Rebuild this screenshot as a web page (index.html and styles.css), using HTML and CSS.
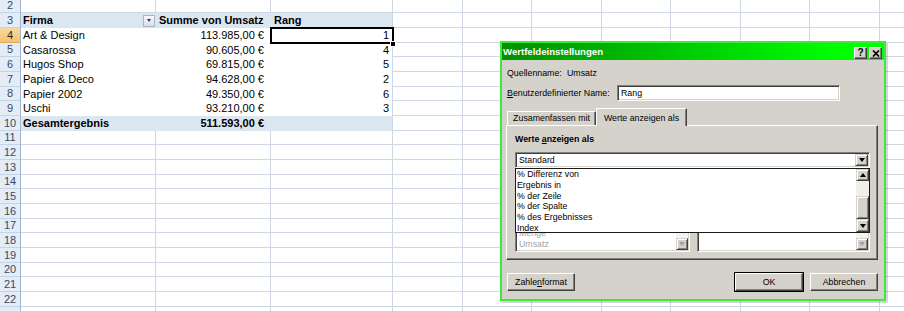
FILE: index.html
```html
<!DOCTYPE html>
<html lang="de">
<head>
<meta charset="utf-8">
<title>Wertfeldeinstellungen</title>
<link rel="stylesheet" href="styles.css">
</head>
<body>
<div class="sheet">
  <div class="rowheads">
    <div class="rh">2</div>
    <div class="rh">3</div>
    <div class="rh active">4</div>
    <div class="rh">5</div>
    <div class="rh">6</div>
    <div class="rh">7</div>
    <div class="rh">8</div>
    <div class="rh">9</div>
    <div class="rh">10</div>
    <div class="rh">11</div>
    <div class="rh">12</div>
    <div class="rh">13</div>
    <div class="rh">14</div>
    <div class="rh">15</div>
    <div class="rh">16</div>
    <div class="rh">17</div>
    <div class="rh">18</div>
    <div class="rh">19</div>
    <div class="rh">20</div>
    <div class="rh">21</div>
    <div class="rh">22</div>
    <div class="rh"></div>
  </div>
  <div class="cells">
    <div class="lines">
      <div class="col wa"></div>
      <div class="col wb"></div>
      <div class="col wc"></div>
      <div class="col"></div>
      <div class="col narrow"></div>
      <div class="col"></div>
      <div class="col narrow"></div>
      <div class="col"></div>
      <div class="col narrow"></div>
      <div class="col"></div>
      <div class="col"></div>
    </div>
    <div class="overlay">
      <div class="pivot">
        <div class="prow band">
          <div class="pc head-a">Firma<span class="filter"><i class="tri-down small"></i></span></div>
          <div class="pc">Summe von Umsatz</div>
          <div class="pc">Rang</div>
        </div>
        <div class="prow">
          <div class="pc">Art &amp; Design</div>
          <div class="pc num">113.985,00 €</div>
          <div class="pc num rc sel">1</div>
        </div>
        <div class="prow">
          <div class="pc">Casarossa</div>
          <div class="pc num">90.605,00 €</div>
          <div class="pc num rc">4</div>
        </div>
        <div class="prow">
          <div class="pc">Hugos Shop</div>
          <div class="pc num">69.815,00 €</div>
          <div class="pc num rc">5</div>
        </div>
        <div class="prow">
          <div class="pc">Papier &amp; Deco</div>
          <div class="pc num">94.628,00 €</div>
          <div class="pc num rc">2</div>
        </div>
        <div class="prow">
          <div class="pc">Papier 2002</div>
          <div class="pc num">49.350,00 €</div>
          <div class="pc num rc">6</div>
        </div>
        <div class="prow">
          <div class="pc">Uschi</div>
          <div class="pc num">93.210,00 €</div>
          <div class="pc num rc">3</div>
        </div>
        <div class="prow band">
          <div class="pc">Gesamtergebnis</div>
          <div class="pc num">511.593,00 €</div>
          <div class="pc"></div>
        </div>
      </div>
    </div>
  </div>
</div>

<div class="dialog">
  <div class="titlebar">
    <span class="title">Wertfeldeinstellungen</span>
    <div class="tbtns">
      <span class="tbtn q">?</span>
      <span class="tbtn"><svg width="8" height="7" viewBox="0 0 8 7"><path d="M1 0.5 L7 6.5 M7 0.5 L1 6.5" stroke="#000" stroke-width="1.7" fill="none"/></svg></span>
    </div>
  </div>
  <div class="dbody">
    <div class="line src"><span class="lbl lbl-src">Quellenname:</span><span>Umsatz</span></div>
    <div class="line name"><span class="lbl lbl-name"><u>B</u>enutzerdefinierter Name:</span><div class="input">Rang</div></div>
    <div class="tabs">
      <div class="tab">Zusamenfassen mit</div>
      <div class="tab active">Werte anzeigen als</div>
    </div>
    <div class="panel">
      <div class="grp">Werte <u>a</u>nzeigen als</div>
      <div class="combo-wrap">
        <div class="combo"><span class="ctext">Standard</span><span class="sbtn cbtn"><i class="tri-down"></i></span></div>
        <div class="droplist">
          <div class="items">
            <div class="item">% Differenz von</div>
            <div class="item">Ergebnis in</div>
            <div class="item">% der Zeile</div>
            <div class="item">% der Spalte</div>
            <div class="item">% des Ergebnisses</div>
            <div class="item">Index</div>
          </div>
          <div class="vscroll">
            <span class="sbtn up"><i class="tri-up"></i></span>
            <span class="track"></span>
            <span class="thumb"></span>
            <span class="sbtn dn"><i class="tri-down"></i></span>
          </div>
        </div>
      </div>
      <div class="base">
        <div class="basecol left">
          <div class="blbl"></div>
          <div class="lbox">
            <div class="litems">
              <div class="litem">Menge</div>
              <div class="litem">Umsatz</div>
            </div>
            <div class="lscroll"><span class="ltrack"></span><span class="sbtn lbtn"><i class="tri-down dis"></i></span></div>
          </div>
        </div>
        <div class="basecol right">
          <div class="blbl"></div>
          <div class="lbox">
            <div class="litems"></div>
            <div class="lscroll"><span class="ltrack"></span><span class="sbtn lbtn"><i class="tri-down dis"></i></span></div>
          </div>
        </div>
      </div>
    </div>
    <div class="btnrow">
      <button class="btn">Zahle<u>n</u>format</button>
      <span class="spacer"></span>
      <button class="btn default">OK</button>
      <button class="btn">Abbrechen</button>
    </div>
  </div>
</div>
</body>
</html>
```

FILE: styles.css
```css
html, body {
  margin: 0;
  padding: 0;
}
body {
  width: 904px;
  height: 311px;
  overflow: hidden;
  background: #fff;
  font-family: "Liberation Sans", Arial, sans-serif;
  position: relative;
  color: #000;
}

/* ---------- spreadsheet ---------- */
.sheet {
  display: grid;
  grid-template-columns: 21px 1fr;
  margin-top: -1px;
  width: 904px;
  height: 312px;
  overflow: hidden;
}
.rowheads {
  display: flex;
  flex-direction: column;
  background: #e4ecf7;
  border-right: 1px solid #9eb6ce;
  box-sizing: border-box;
  overflow: hidden;
}
.rh {
  flex: none;
  height: 15px;
  box-sizing: border-box;
  border-bottom: 1px solid #c5d3e6;
  font-size: 11px;
  line-height: 14px;
  text-align: center;
  color: #3b4a63;
}
.rh:nth-child(3n+1) {
  height: 14px;
  line-height: 13px;
}
.rh.active {
  background: linear-gradient(#f9d99f, #f5c270);
  color: #2a2a2a;
  border-bottom-color: #e0a955;
}

.cells {
  display: grid;
  overflow: hidden;
}
.lines {
  grid-area: 1 / 1;
  display: flex;
}
.col {
  flex: none;
  width: 70px;
  box-sizing: border-box;
  border-right: 1px solid #d0d7e5;
  background-image: repeating-linear-gradient(to bottom,
    transparent 0, transparent 13px, #d0d7e5 13px, #d0d7e5 14px,
    transparent 14px, transparent 28px, #d0d7e5 28px, #d0d7e5 29px,
    transparent 29px, transparent 43px, #d0d7e5 43px, #d0d7e5 44px);
}
.col.narrow { width: 69px; }
.col.wa { width: 135px; }
.col.wb { width: 115px; }
.col.wc { width: 122px; }

.overlay {
  grid-area: 1 / 1;
  padding-top: 14px;
}
.pivot {
  width: 371px;
  background: #fff;
  display: flex;
  flex-direction: column;
}
.prow {
  display: grid;
  grid-template-columns: 135px 115px 1fr;
  height: 15px;
  font-size: 11px;
  line-height: 15px;
}
.prow:nth-child(3n) {
  height: 14px;
  line-height: 14px;
}
.prow.band {
  background: #dce6f1;
  font-weight: bold;
}
.pc {
  padding: 0 2px;
  white-space: nowrap;
}
.prow .pc:nth-child(2),
.prow .pc:nth-child(3) {
  padding-left: 3px;
}
.pc.num {
  text-align: right;
  padding-right: 7px;
}
.pc.rc {
  padding-right: 3px;
}
.head-a {
  display: flex;
  align-items: center;
  justify-content: space-between;
  padding-right: 1px;
}
.filter {
  width: 12px;
  height: 12px;
  box-sizing: border-box;
  border: 1px solid #a7b5c9;
  background: linear-gradient(#f6f8fb, #d8dfe9);
  display: flex;
  align-items: center;
  justify-content: center;
}
.sel {
  position: relative;
}
.sel::before {
  content: "";
  position: absolute;
  left: -1px;
  right: -2px;
  top: -1px;
  bottom: -1px;
  border: 2px solid #000;
}
.sel::after {
  content: "";
  position: absolute;
  right: -4px;
  bottom: -4px;
  width: 4px;
  height: 4px;
  background: #000;
  border: 1px solid #fff;
}

/* ---------- triangles ---------- */
.tri-down, .tri-up {
  display: block;
  width: 0;
  height: 0;
  border-left: 3.5px solid transparent;
  border-right: 3.5px solid transparent;
}
.tri-down { border-top: 4px solid #000; }
.tri-up { border-bottom: 4px solid #000; }
.tri-down.small {
  border-left-width: 2.5px;
  border-right-width: 2.5px;
  border-top: 3px solid #3a3a3a;
}
.tri-down.dis { border-top-color: #a0a0a0; }

/* ---------- dialog ---------- */
.dialog {
  position: absolute;
  left: 500px;
  top: 41px;
  width: 382px;
  height: 256px;
  border: 2px solid #3bea3b;
  background: #d5d2cc;
  box-shadow: 2px 2px 0 rgba(0, 0, 0, 0.16);
  font-size: 8.8px;
  display: flex;
  flex-direction: column;
}
.titlebar {
  height: 17px;
  flex: none;
  display: flex;
  align-items: center;
  padding-left: 1px;
  background: linear-gradient(to right, #009000 0%, #00c800 45%, #00ff00 88%);
}
.title {
  color: #fff;
  font-weight: bold;
  font-size: 9.6px;
}
.tbtns {
  margin-left: auto;
  align-self: flex-end;
  margin-bottom: 1px;
  display: flex;
  gap: 2px;
  padding-right: 2px;
}
.tbtn {
  width: 13px;
  height: 12px;
  box-sizing: border-box;
  background: #d5d2cc;
  border: 1px solid;
  border-color: #fff #404040 #404040 #fff;
  box-shadow: inset -1px -1px #808080;
  display: flex;
  align-items: center;
  justify-content: center;
  font-weight: bold;
  font-size: 10px;
  line-height: 10px;
}

.dbody {
  flex: 1;
  display: flex;
  flex-direction: column;
  padding: 0 6px 0 4px;
}
.line {
  display: flex;
  align-items: center;
  margin-left: 1px;
}
.line.src {
  margin-top: 7px;
  height: 12px;
}
.line.name {
  margin-top: 6px;
  height: 16px;
}
.lbl-src { width: 60px; }
.lbl-name { width: 110px; }
.input {
  width: 223px;
  height: 16px;
  box-sizing: border-box;
  background: #fff;
  border: 1px solid;
  border-color: #808080 #fff #fff #808080;
  box-shadow: inset 1px 1px #404040, inset -1px -1px #d5d2cc;
  padding-left: 3px;
  line-height: 14px;
}

.tabs {
  display: flex;
  align-items: flex-end;
  height: 17px;
  margin-top: 7px;
  margin-left: 1px;
  position: relative;
  z-index: 1;
}
.tab {
  height: 14px;
  box-sizing: border-box;
  width: 89px;
  text-align: center;
  line-height: 13px;
  border: 1px solid;
  border-color: #fff #404040 transparent #fff;
  border-bottom: none;
  box-shadow: inset -1px 0 #808080;
  white-space: nowrap;
}
.tab.active {
  width: 91px;
  height: 18px;
  margin-bottom: -1px;
  padding-top: 3px;
  line-height: 13px;
  background: #d5d2cc;
}

.panel {
  height: 135px;
  box-sizing: border-box;
  border: 1px solid;
  border-color: #fff #404040 #404040 #fff;
  box-shadow: inset -1px -1px #808080;
  padding: 0 7px 0 8px;
  display: flex;
  flex-direction: column;
}
.grp {
  margin-top: 7px;
  height: 12px;
  line-height: 12px;
  font-weight: bold;
}
.combo-wrap {
  position: relative;
  margin-top: 7px;
}
.combo {
  height: 16px;
  box-sizing: border-box;
  background: #fff;
  border: 1px solid;
  border-color: #808080 #fff #fff #808080;
  box-shadow: inset 1px 1px #404040, inset -1px -1px #d5d2cc;
  display: flex;
  align-items: center;
  padding: 1px 1px 1px 3px;
}
.ctext { flex: 1; }
.sbtn {
  display: flex;
  align-items: center;
  justify-content: center;
  box-sizing: border-box;
  background: #d5d2cc;
  border: 1px solid;
  border-color: #d5d2cc #404040 #404040 #d5d2cc;
  box-shadow: inset 1px 1px #fff, inset -1px -1px #808080;
}
.cbtn {
  width: 13px;
  height: 12px;
}
.droplist {
  position: absolute;
  left: 0;
  right: 0;
  top: 100%;
  height: 65px;
  box-sizing: border-box;
  border: 1px solid #1a1a1a;
  background: #fff;
  display: flex;
  z-index: 2;
}
.items {
  flex: 1;
  padding-left: 1px;
}
.item {
  height: 10.8px;
  line-height: 10.8px;
  white-space: nowrap;
}
.vscroll {
  width: 13px;
  display: flex;
  flex-direction: column;
}
.vscroll .up { height: 12px; }
.vscroll .track { height: 15px; background: #f1efe9; }
.vscroll .thumb {
  height: 23px;
  box-sizing: border-box;
  background: #d5d2cc;
  border: 1px solid;
  border-color: #d5d2cc #404040 #404040 #d5d2cc;
  box-shadow: inset 1px 1px #fff, inset -1px -1px #808080;
}
.vscroll .dn { height: 13px; }

.base {
  display: flex;
  gap: 7px;
  margin-top: 7px;
}
.basecol {
  display: flex;
  flex-direction: column;
}
.basecol.left { width: 175px; }
.basecol.right { flex: 1; }
.blbl {
  height: 12px;
}
.lbox {
  margin-top: 3px;
  height: 62px;
  box-sizing: border-box;
  background: #fff;
  border: 1px solid;
  border-color: #808080 #fff #fff #808080;
  box-shadow: inset 1px 1px #404040, inset -1px -1px #d5d2cc;
  display: flex;
  padding: 1px;
}
.litems {
  flex: 1;
  display: flex;
  flex-direction: column;
  justify-content: flex-end;
  padding: 0 0 0 2px;
  color: #a3a3a3;
}
.litem {
  height: 10.8px;
  line-height: 10.8px;
}
.lscroll {
  width: 12px;
  display: flex;
  flex-direction: column;
}
.ltrack {
  flex: 1;
  background: #f4f3ef;
}
.lbtn { height: 12px; }

.btnrow {
  display: flex;
  align-items: center;
  gap: 7px;
  height: 20px;
  margin-top: 12px;
  margin-left: 1px;
}
.spacer { flex: 1; }
.btn {
  width: 68px;
  height: 18px;
  box-sizing: border-box;
  font-family: inherit;
  font-size: 8.8px;
  color: #000;
  background: #d5d2cc;
  border: 1px solid;
  border-color: #fff #404040 #404040 #fff;
  box-shadow: inset -1px -1px #808080;
  padding: 0;
  margin: 0;
}
.btn.default {
  box-shadow: 0 0 0 1px #000, inset -1px -1px #808080;
}
```
